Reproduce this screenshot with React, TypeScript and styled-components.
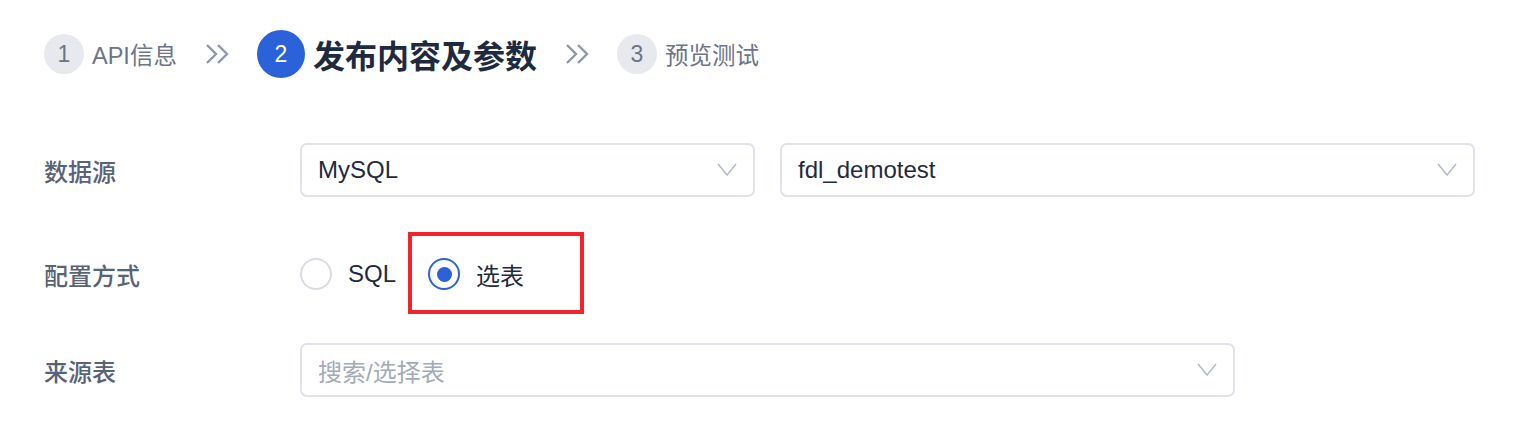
import styled, { createGlobalStyle } from "styled-components";

const GlobalStyle = createGlobalStyle`
  body {
    margin: 0;
    background: #ffffff;
    font-family: "Liberation Sans", "Noto Sans CJK SC", sans-serif;
  }
`;

const Page = styled.div`
  width: 1526px;
  height: 426px;
  padding: 30px 44px 0 44px;
  box-sizing: border-box;
  display: flex;
  flex-direction: column;
`;

const Steps = styled.div`
  display: flex;
  align-items: center;
  height: 48px;
`;

const Step = styled.div`
  display: flex;
  align-items: center;
  gap: 8px;
`;

const StepCircle = styled.div<{ $active?: boolean }>`
  width: ${({ $active }) => ($active ? "48px" : "40px")};
  height: ${({ $active }) => ($active ? "48px" : "40px")};
  border-radius: 50%;
  background: ${({ $active }) => ($active ? "#2b62d9" : "#e7e9ef")};
  color: ${({ $active }) => ($active ? "#ffffff" : "#6b7488")};
  font-size: 23px;
  display: flex;
  align-items: center;
  justify-content: center;
  flex-shrink: 0;
`;

const StepLabel = styled.span<{ $active?: boolean }>`
  font-size: ${({ $active }) => ($active ? "32px" : "23.5px")};
  font-weight: ${({ $active }) => ($active ? 700 : 400)};
  color: ${({ $active }) => ($active ? "#1e2a3f" : "#6b7488")};
  white-space: nowrap;
`;

const Arrow = styled.svg`
  width: 24px;
  height: 22px;
  margin: 0 28px;
  flex-shrink: 0;
`;

const Form = styled.div`
  margin-top: 65px;
  display: flex;
  flex-direction: column;
`;

const Row = styled.div<{ $height: number; $shift?: number }>`
  display: flex;
  align-items: center;
  height: ${({ $height }) => $height}px;
  padding-top: ${({ $shift }) => ($shift ? $shift * 2 : 0)}px;
  box-sizing: border-box;
`;

const Label = styled.div`
  width: 256px;
  flex-shrink: 0;
  font-size: 24px;
  font-weight: 500;
  color: #596378;
`;

const Selects = styled.div`
  display: flex;
  gap: 25px;
`;

const Select = styled.div<{ $width: number }>`
  width: ${({ $width }) => $width}px;
  height: 54px;
  box-sizing: border-box;
  border: 2px solid #dfe3ea;
  border-radius: 7px;
  padding: 0 16px 0 16px;
  display: flex;
  align-items: center;
  justify-content: space-between;
`;

const SelectText = styled.span<{ $placeholder?: boolean }>`
  font-size: 24px;
  color: ${({ $placeholder }) => ($placeholder ? "#a3aab8" : "#1e2a3f")};
`;

const Caret = styled.svg`
  width: 20px;
  height: 14px;
`;

const Radios = styled.div`
  display: flex;
  align-items: center;
  gap: 32px;
`;

const RadioOption = styled.label`
  position: relative;
  display: flex;
  align-items: center;
  gap: 16px;
  font-size: 24px;
  color: #1e2a3f;
`;

const RadioDot = styled.span<{ $checked?: boolean }>`
  width: 32px;
  height: 32px;
  box-sizing: border-box;
  border-radius: 50%;
  border: 2px solid ${({ $checked }) => ($checked ? "#2b62d9" : "#d8dce5")};
  display: flex;
  align-items: center;
  justify-content: center;

  &::after {
    content: "";
    display: ${({ $checked }) => ($checked ? "block" : "none")};
    width: 15px;
    height: 15px;
    border-radius: 50%;
    background: #2b62d9;
  }
`;

const Highlight = styled.span`
  position: absolute;
  left: -20px;
  top: 50%;
  margin-top: -42px;
  width: 176px;
  height: 82px;
  box-sizing: border-box;
  border: 4px solid #f2232b;
  pointer-events: none;
`;

const DoubleArrow = () => (
  <Arrow viewBox="0 0 24 22">
    <path
      d="M2 2 L11 11 L2 20 M13 2 L22 11 L13 20"
      fill="none"
      stroke="#8e97a8"
      strokeWidth="2.4"
    />
  </Arrow>
);

const ChevronDown = () => (
  <Caret viewBox="0 0 20 14">
    <path d="M1 1 L10 12 L19 1" fill="none" stroke="#b6bcc8" strokeWidth="1.6" />
  </Caret>
);

const App = () => {
  return (
    <>
      <GlobalStyle />
      <Page>
        <Steps>
          <Step>
            <StepCircle>1</StepCircle>
            <StepLabel>API信息</StepLabel>
          </Step>
          <DoubleArrow />
          <Step>
            <StepCircle $active>2</StepCircle>
            <StepLabel $active>发布内容及参数</StepLabel>
          </Step>
          <DoubleArrow />
          <Step>
            <StepCircle>3</StepCircle>
            <StepLabel>预览测试</StepLabel>
          </Step>
        </Steps>

        <Form>
          <Row $height={54}>
            <Label>数据源</Label>
            <Selects>
              <Select $width={455}>
                <SelectText>MySQL</SelectText>
                <ChevronDown />
              </Select>
              <Select $width={695}>
                <SelectText>fdl_demotest</SelectText>
                <ChevronDown />
              </Select>
            </Selects>
          </Row>
          <Row $height={146} $shift={4}>
            <Label>配置方式</Label>
            <Radios>
              <RadioOption>
                <RadioDot />
                SQL
              </RadioOption>
              <RadioOption>
                <RadioDot $checked />
                选表
                <Highlight />
              </RadioOption>
            </Radios>
          </Row>
          <Row $height={54}>
            <Label>来源表</Label>
            <Select $width={935}>
              <SelectText $placeholder>搜索/选择表</SelectText>
              <ChevronDown />
            </Select>
          </Row>
        </Form>
      </Page>
    </>
  );
};

export default App;
